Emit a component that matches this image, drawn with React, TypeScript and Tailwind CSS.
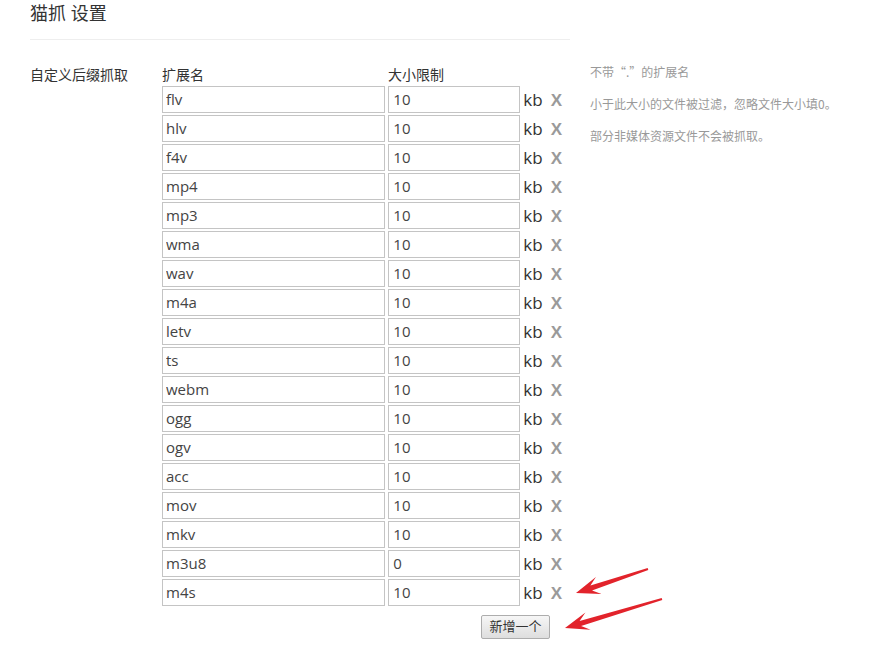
import { Fragment } from 'react';

const ROWS: { ext: string; size: string }[] = [
  { ext: 'flv', size: '10' },
  { ext: 'hlv', size: '10' },
  { ext: 'f4v', size: '10' },
  { ext: 'mp4', size: '10' },
  { ext: 'mp3', size: '10' },
  { ext: 'wma', size: '10' },
  { ext: 'wav', size: '10' },
  { ext: 'm4a', size: '10' },
  { ext: 'letv', size: '10' },
  { ext: 'ts', size: '10' },
  { ext: 'webm', size: '10' },
  { ext: 'ogg', size: '10' },
  { ext: 'ogv', size: '10' },
  { ext: 'acc', size: '10' },
  { ext: 'mov', size: '10' },
  { ext: 'mkv', size: '10' },
  { ext: 'm3u8', size: '0' },
  { ext: 'm4s', size: '10' },
];

const NOTES = ['不带“.”的扩展名', '小于此大小的文件被过滤，忽略文件大小填0。', '部分非媒体资源文件不会被抓取。'];

// annotation arrow, tail -> tip
function arrowPoints(tx: number, ty: number, px: number, py: number) {
  const dx = px - tx;
  const dy = py - ty;
  const len = Math.hypot(dx, dy);
  const ux = dx / len;
  const uy = dy / len;
  const nx = -uy;
  const ny = ux;
  const head = 22;
  const notch = 6;
  const bx = px - ux * head;
  const by = py - uy * head;
  const jx = bx + ux * notch;
  const jy = by + uy * notch;
  const pts = [
    [tx + nx * 1, ty + ny * 1],
    [jx + nx * 2.6, jy + ny * 2.6],
    [bx - ux * 2 + nx * 9, by - uy * 2 + ny * 9],
    [px, py],
    [bx - ux * 2 - nx * 9, by - uy * 2 - ny * 9],
    [jx - nx * 2.6, jy - ny * 2.6],
    [tx - nx * 1, ty - ny * 1],
  ];
  return pts.map((p) => p.map((v) => v.toFixed(1)).join(',')).join(' ');
}

export default function App() {
  return (
    <div
      className="relative w-[873px] h-[647px] bg-white text-[#333] overflow-hidden"
      style={{ fontFamily: '"Open Sans", "Noto Sans CJK SC", sans-serif' }}
    >
      <div className="pl-[30px]">
        <div className="w-[540px] h-[40px] border-b border-[#eee]">
          <h1 className="text-[18px] leading-[24px] pt-[1px] text-[#333]">猫抓 设置</h1>
        </div>

        <div className="flex pt-[24px]">
          <div className="w-[132px] text-[14px] leading-[22px] text-[#333]">自定义后缀抓取</div>

          <div className="w-[400px]">
            <div className="flex text-[14px] leading-[22px] h-[22px]">
              <span className="w-[226px]">扩展名</span>
              <span>大小限制</span>
            </div>
            <div className="flex flex-col gap-[2px]">
              {ROWS.map((r, i) => (
                <Fragment key={i}>
                  <div className="flex items-center h-[27px]">
                    <input
                      readOnly
                      value={r.ext}
                      className="w-[224px] h-[27px] px-[3px] pb-[2px] border border-[#c4c4c4] text-[15px] text-[#444] outline-none"
                    />
                    <input
                      readOnly
                      value={r.size}
                      className="ml-[3px] w-[132px] h-[27px] px-[4px] pb-[2px] border border-[#c4c4c4] text-[15px] text-[#444] outline-none"
                    />
                    <span className="ml-[3px] text-[17px] leading-none text-[#333]">kb</span>
                    <span
                      className="ml-[8px] text-[17px] leading-none font-bold text-[#9a9a9a] pt-[1px]"
                      style={{ fontFamily: '"Liberation Sans", sans-serif' }}
                    >
                      X
                    </span>
                  </div>
                </Fragment>
              ))}
            </div>
            <div className="pt-[7px] pl-[319px]">
              <button className="w-[69px] h-[24px] border border-[#adadad] rounded-[2px] bg-gradient-to-b from-[#f6f6f6] to-[#dedede] text-[13px] leading-none text-[#333]">
                新增一个
              </button>
            </div>
          </div>

          <div
            className="ml-[28px] -mt-[1px] flex flex-col gap-[14px] text-[12px] leading-[18px] text-[#999]"
            style={{ fontFamily: '"Noto Sans CJK SC", sans-serif' }}
          >
            {NOTES.map((n) => (
              <p key={n}>{n}</p>
            ))}
          </div>
        </div>
      </div>

      <svg className="absolute left-0 top-0 pointer-events-none" width="873" height="647">
        <polygon points={arrowPoints(648, 569, 576, 593)} fill="#e2232b" />
        <polygon points={arrowPoints(662, 599, 565, 628)} fill="#e2232b" />
      </svg>
    </div>
  );
}
